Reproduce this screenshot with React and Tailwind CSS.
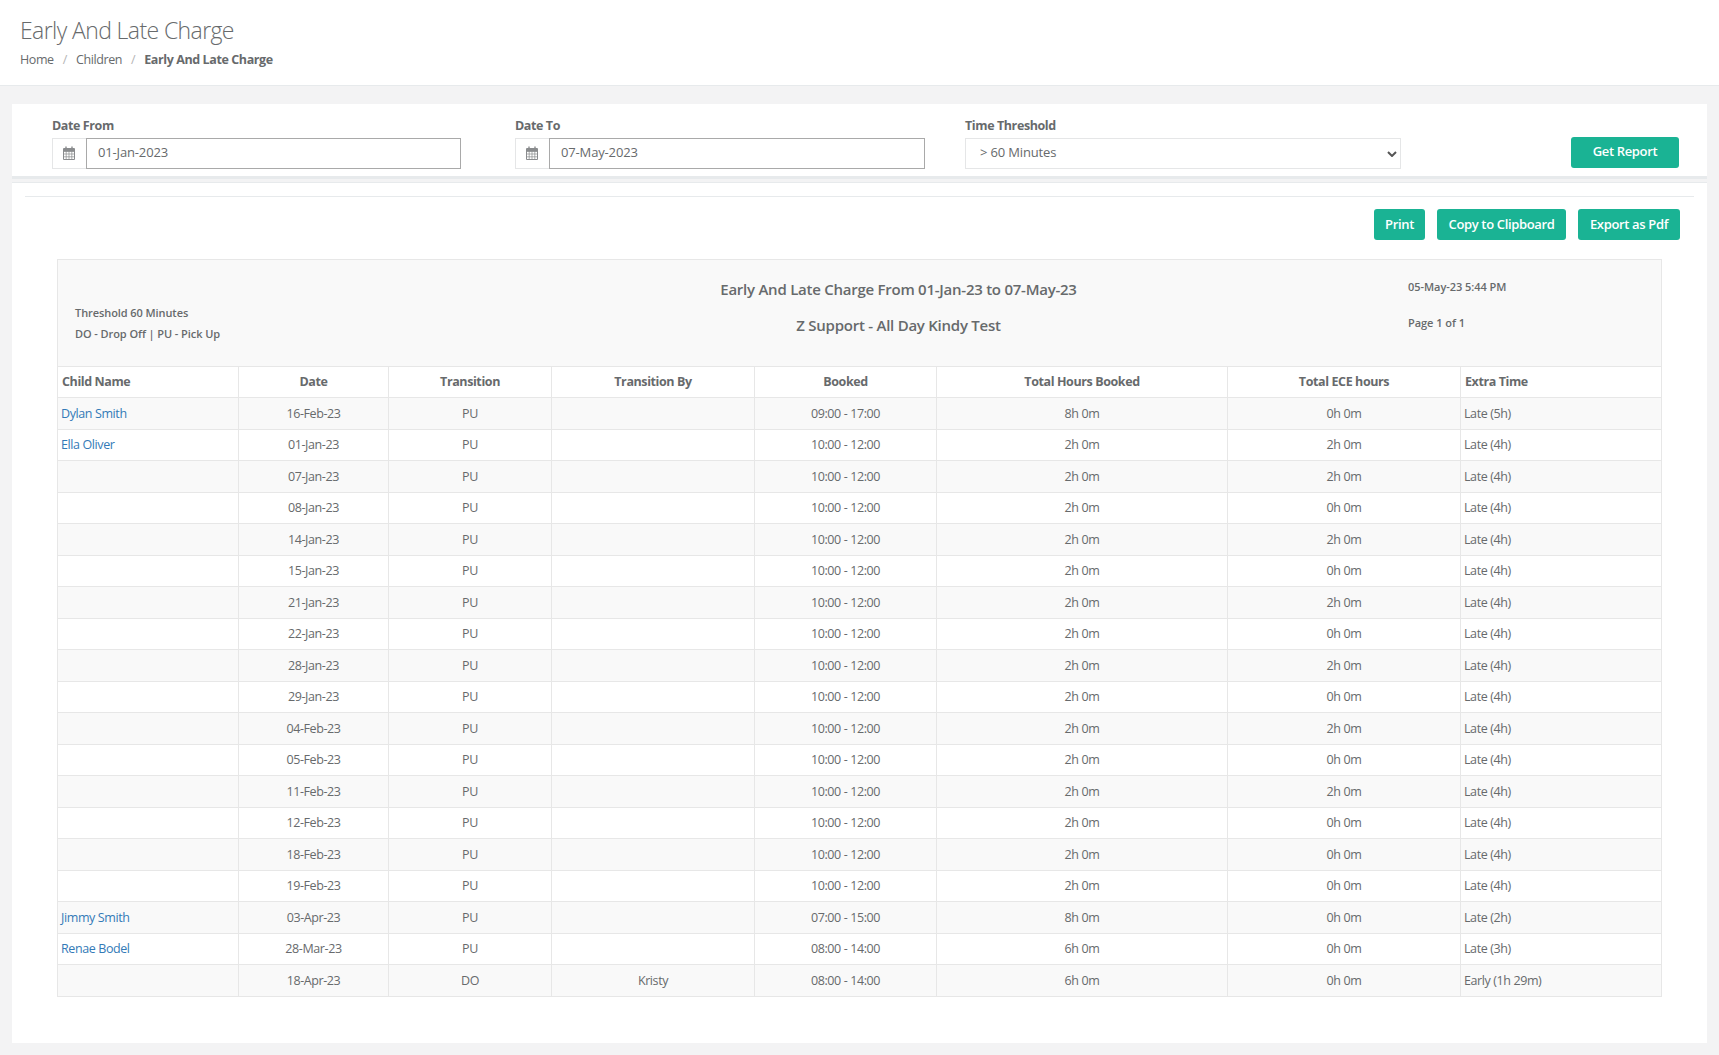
const rows = [
  ["Dylan Smith", "16-Feb-23", "PU", "", "09:00 - 17:00", "8h 0m", "0h 0m", "Late (5h)"],
  ["Ella Oliver", "01-Jan-23", "PU", "", "10:00 - 12:00", "2h 0m", "2h 0m", "Late (4h)"],
  ["", "07-Jan-23", "PU", "", "10:00 - 12:00", "2h 0m", "2h 0m", "Late (4h)"],
  ["", "08-Jan-23", "PU", "", "10:00 - 12:00", "2h 0m", "0h 0m", "Late (4h)"],
  ["", "14-Jan-23", "PU", "", "10:00 - 12:00", "2h 0m", "2h 0m", "Late (4h)"],
  ["", "15-Jan-23", "PU", "", "10:00 - 12:00", "2h 0m", "0h 0m", "Late (4h)"],
  ["", "21-Jan-23", "PU", "", "10:00 - 12:00", "2h 0m", "2h 0m", "Late (4h)"],
  ["", "22-Jan-23", "PU", "", "10:00 - 12:00", "2h 0m", "0h 0m", "Late (4h)"],
  ["", "28-Jan-23", "PU", "", "10:00 - 12:00", "2h 0m", "2h 0m", "Late (4h)"],
  ["", "29-Jan-23", "PU", "", "10:00 - 12:00", "2h 0m", "0h 0m", "Late (4h)"],
  ["", "04-Feb-23", "PU", "", "10:00 - 12:00", "2h 0m", "2h 0m", "Late (4h)"],
  ["", "05-Feb-23", "PU", "", "10:00 - 12:00", "2h 0m", "0h 0m", "Late (4h)"],
  ["", "11-Feb-23", "PU", "", "10:00 - 12:00", "2h 0m", "2h 0m", "Late (4h)"],
  ["", "12-Feb-23", "PU", "", "10:00 - 12:00", "2h 0m", "0h 0m", "Late (4h)"],
  ["", "18-Feb-23", "PU", "", "10:00 - 12:00", "2h 0m", "0h 0m", "Late (4h)"],
  ["", "19-Feb-23", "PU", "", "10:00 - 12:00", "2h 0m", "0h 0m", "Late (4h)"],
  ["Jimmy Smith", "03-Apr-23", "PU", "", "07:00 - 15:00", "8h 0m", "0h 0m", "Late (2h)"],
  ["Renae Bodel", "28-Mar-23", "PU", "", "08:00 - 14:00", "6h 0m", "0h 0m", "Late (3h)"],
  ["", "18-Apr-23", "DO", "Kristy", "08:00 - 14:00", "6h 0m", "0h 0m", "Early (1h 29m)"],
];

function CalendarIcon() {
  return (
    <svg width="12" height="14" viewBox="0 0 12 14" className="mb-[2px] mr-[1px] text-[#8a8c8e]">
      <path d="M0.5 2.5h11v11h-11z" fill="none" stroke="currentColor" />
      <path d="M0.5 5.5h11M0.5 8h11M0.5 10.8h11M3.2 5v8M6 5v8M8.8 5v8" stroke="currentColor" strokeWidth="0.7" />
      <path d="M0.5 3h11v2.5h-11z" fill="currentColor" />
      <path d="M3 0.5v3M9 0.5v3" stroke="currentColor" strokeWidth="1.4" />
    </svg>
  );
}

function DateField({ label, value, width }) {
  return (
    <div className={width}>
      <div className="mb-[3px] text-[12.5px] leading-[18px] font-bold tracking-[-0.4px]">{label}</div>
      <div className="flex h-[31px]">
        <div className="flex w-[34px] items-center justify-center border border-r-0 border-[#e5e6e7]">
          <CalendarIcon />
        </div>
        <div className="flex flex-1 items-center border border-[#a9a9a9] px-[11px] pb-[1px] text-[13px] tracking-[-0.15px]">{value}</div>
      </div>
    </div>
  );
}

function GreenButton({ children, className }) {
  return (
    <button className={`h-[31px] rounded-[3px] bg-[#1ab394] text-[13px] font-semibold tracking-[-0.35px] text-white ${className}`}>
      {children}
    </button>
  );
}

export default function App() {
  return (
    <div className="min-h-[1055px] bg-[#f3f3f4] font-['Open_Sans',sans-serif] text-[12.5px] tracking-[-0.4px] text-[#676a6c]">
      <div className="h-[86px] border-b border-[#e7eaec] bg-white pl-5 pt-[15px]">
        <h2 className="text-[23px] leading-[30px] font-light tracking-[-0.6px]">Early And Late Charge</h2>
        <div className="mt-[6px] flex gap-[9px] leading-[18px]">
          <span>Home</span>
          <span className="text-[#b5b5b5]">/</span>
          <span>Children</span>
          <span className="text-[#b5b5b5]">/</span>
          <span className="font-bold">Early And Late Charge</span>
        </div>
      </div>

      <div className="mx-3 mt-[18px]">
        <div className="flex h-[72px] items-start bg-white pl-[40px] pt-[13px]">
          <DateField label="Date From" value="01-Jan-2023" width="w-[409px]" />
          <div className="ml-[54px]">
            <DateField label="Date To" value="07-May-2023" width="w-[410px]" />
          </div>
          <div className="ml-[40px] w-[436px]">
            <div className="mb-[3px] text-[12.5px] leading-[18px] font-bold">Time Threshold</div>
            <div className="flex h-[31px] items-center justify-between border border-[#e5e6e7] pb-[1px] pl-[14px] pr-[3px] text-[13px] tracking-[-0.15px]">
              <span>&gt; 60 Minutes</span>
              <svg width="10" height="6" viewBox="0 0 10 6" className="mt-[1px] text-[#555]">
                <path d="M1 1l4 4 4-4" fill="none" stroke="currentColor" strokeWidth="2" />
              </svg>
            </div>
          </div>
          <div className="ml-[170px] mt-[20px] w-[108px]">
            <GreenButton className="w-full pb-[2px]">Get Report</GreenButton>
          </div>
        </div>
        <div className="h-[3px] bg-[#e7eaec]" />
        <div className="h-[4px] border-b border-[#e7eaec]" />

        <div className="h-[860px] bg-white px-3 pt-[13px]">
          <div className="mx-[1px] border-t border-[#e7eaec]" />
          <div className="mt-3 flex justify-end gap-3 pr-[15px]">
            <GreenButton className="w-[51px]">Print</GreenButton>
            <GreenButton className="w-[129px]">Copy to Clipboard</GreenButton>
            <GreenButton className="w-[102px]">Export as Pdf</GreenButton>
          </div>

          <div className="ml-[33px] mt-[19px] w-[1604px]">
            <div className="relative -mr-[1px] flex h-[107px] border border-b-0 border-[#e7e7e7] bg-[#f9f9f9]">
              <div className="w-[1350px]">
                <div className="pl-[17px] pt-[42px] text-[11px] font-semibold leading-[21px] tracking-[-0.08px]">
                  <div>Threshold 60 Minutes</div>
                  <div>DO - Drop Off | PU - Pick Up</div>
                </div>
              </div>
              <div className="absolute left-[334px] top-[19px] w-[1013px] text-center text-[15px] font-semibold leading-[20px] tracking-[-0.25px]">
                <div>Early And Late Charge From 01-Jan-23 to 07-May-23</div>
                <div className="mt-[16px]">Z Support - All Day Kindy Test</div>
              </div>
              <div className="pt-[18px] text-[11px] font-semibold leading-[18px] tracking-[-0.05px]">
                <div>05-May-23 5:44 PM</div>
                <div className="mt-[18px]">Page 1 of 1</div>
              </div>
            </div>
            <table className="w-full table-fixed border-collapse">
              <colgroup>
                <col className="w-[181px]" />
                <col className="w-[150px]" />
                <col className="w-[163px]" />
                <col className="w-[203px]" />
                <col className="w-[182px]" />
                <col className="w-[291px]" />
                <col className="w-[233px]" />
                <col className="w-[201px]" />
              </colgroup>
              <thead>
                <tr className="h-[31px]">
                  {["Child Name", "Date", "Transition", "Transition By", "Booked", "Total Hours Booked", "Total ECE hours", "Extra Time"].map((h, i) => (
                    <th
                      key={h}
                      className={`border border-[#e7e7e7] px-[4px] font-bold ${i === 0 || i === 7 ? "text-left" : "text-center"}`}
                    >
                      {h}
                    </th>
                  ))}
                </tr>
              </thead>
              <tbody>
                {rows.map((r, idx) => (
                  <tr key={r[1]} className={`h-[31.5px] ${idx % 2 === 0 ? "bg-[#f9f9f9]" : "bg-white"}`}>
                    {r.map((c, i) => (
                      <td
                        key={i}
                        className={`border border-[#e7e7e7] px-[3px] pt-[2px] ${i === 0 ? "text-left text-[#337ab7]" : i === 7 ? "text-left" : "text-center"}`}
                      >
                        {c}
                      </td>
                    ))}
                  </tr>
                ))}
              </tbody>
            </table>
          </div>
        </div>
      </div>
    </div>
  );
}
